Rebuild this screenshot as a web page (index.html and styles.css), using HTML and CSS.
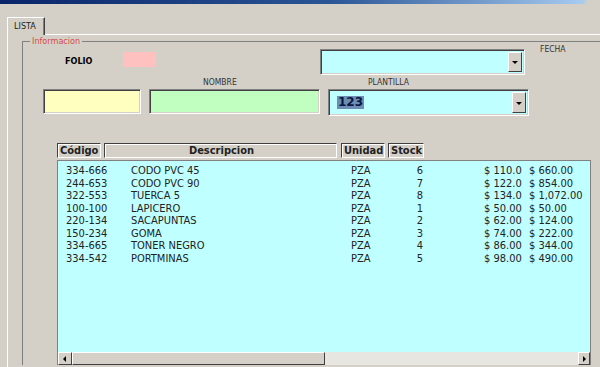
FILE: index.html
```html
<!DOCTYPE html>
<html lang="es">
<head>
  <meta charset="UTF-8" />
  <meta name="viewport" content="width=device-width, initial-scale=1.0"/>
  <title>Lista</title>
  <link rel="stylesheet" href="styles.css">
</head>
<body>

  <div class="titlebar"></div>

  <div class="tabs">
    <span class="tab">LISTA</span>
  </div>

  <div class="page">
    <fieldset class="group">
      <legend>Informacion</legend>

      <div class="row row-top">
        <span class="folio">FOLIO</span>
        <span class="pink"></span>
        <div class="combo fecha"><span class="combo-btn"></span></div>
        <span class="lbl fecha-lbl">FECHA</span>
      </div>

      <div class="row row-lbl">
        <span class="lbl nombre-lbl">NOMBRE</span>
        <span class="lbl">PLANTILLA</span>
      </div>

      <div class="row row-inputs">
        <div class="field yellow"></div>
        <div class="field green"></div>
        <div class="combo plantilla">
          <span class="sel">123</span>
          <span class="combo-btn"></span>
        </div>
      </div>

      <div class="list">
        <div class="list-head">
          <span class="hcol h-code">Código</span>
          <span class="hcol h-desc">Descripcion</span>
          <span class="hcol h-unit">Unidad</span>
          <span class="hcol h-stock">Stock</span>
        </div>

        <div class="list-body">
          <div class="rows">
            <div class="item"><span>334-666</span><span>CODO PVC 45</span><span>PZA</span><span class="num">6</span><span></span><span>$ 110.0</span><span>$ 660.00</span></div>
            <div class="item"><span>244-653</span><span>CODO PVC 90</span><span>PZA</span><span class="num">7</span><span></span><span>$ 122.0</span><span>$ 854.00</span></div>
            <div class="item"><span>322-553</span><span>TUERCA 5</span><span>PZA</span><span class="num">8</span><span></span><span>$ 134.0</span><span>$ 1,072.00</span></div>
            <div class="item"><span>100-100</span><span>LAPICERO</span><span>PZA</span><span class="num">1</span><span></span><span>$ 50.00</span><span>$ 50.00</span></div>
            <div class="item"><span>220-134</span><span>SACAPUNTAS</span><span>PZA</span><span class="num">2</span><span></span><span>$ 62.00</span><span>$ 124.00</span></div>
            <div class="item"><span>150-234</span><span>GOMA</span><span>PZA</span><span class="num">3</span><span></span><span>$ 74.00</span><span>$ 222.00</span></div>
            <div class="item"><span>334-665</span><span>TONER NEGRO</span><span>PZA</span><span class="num">4</span><span></span><span>$ 86.00</span><span>$ 344.00</span></div>
            <div class="item"><span>334-542</span><span>PORTMINAS</span><span>PZA</span><span class="num">5</span><span></span><span>$ 98.00</span><span>$ 490.00</span></div>
          </div>

          <div class="hscroll">
            <span class="sbtn left"></span>
            <span class="thumb"></span>
            <span class="track"></span>
            <span class="sbtn right"></span>
          </div>
        </div>
      </div>
    </fieldset>
  </div>

</body>
</html>
```

FILE: styles.css
```css
body {
  margin: 0;
  height: 367px;
  overflow: hidden;
  background-color: #d4d0c8;
  color: #000;
  font-family: "DejaVu Sans Condensed", "DejaVu Sans", sans-serif;
}

.titlebar {
  height: 4px;
  background: linear-gradient(to right, #0a246a, #2a5596 55%, #a6caf0 97%, #d4d0c8 98%);
}

/* pestaña */
.tabs {
  display: flex;
  padding: 13px 0 0 7px;
}

.tab {
  position: relative;
  z-index: 1;
  box-sizing: border-box;
  width: 38px;
  height: 18px;
  margin-bottom: -1px;
  padding-left: 6px;
  background-color: #d4d0c8;
  border-top: 1px solid #fff;
  border-left: 1px solid #fff;
  border-right: 1px solid #404040;
  box-shadow: inset -1px 0 0 #808080;
  font-size: 9px;
  line-height: 16px;
  color: #222;
}

.page {
  margin-left: 7px;
  border-top: 1px solid #fff;
  border-left: 1px solid #fff;
  height: 340px;
}

/* marco Informacion */
.group {
  margin: 1px 0 0 14px;
  padding: 0;
  min-width: 0;
  border: none;
  border-top: 1px solid #808080;
  border-left: 1px solid #808080;
}

.group legend {
  margin-left: 7px;
  padding: 0 2px;
  font-size: 9px;
  line-height: 11px;
  color: #d84a4a;
}

.row {
  display: flex;
}

.row-top {
  margin-top: 2px;
  height: 26px;
  align-items: flex-start;
}

.folio {
  width: 58px;
  margin-left: 42px;
  font-size: 9px;
  font-weight: bold;
  line-height: 25px;
}

.pink {
  width: 33px;
  height: 15px;
  margin-top: 3px;
  background-color: #ffc0c0;
}

.lbl {
  font-size: 8.5px;
  line-height: 10px;
  color: #333;
}

.fecha-lbl {
  margin: -5px 0 0 15px;
}

.row-lbl {
  margin-top: 2px;
  height: 10px;
}

.nombre-lbl {
  width: 165px;
  margin-left: 180px;
}

.row-inputs {
  margin-top: 2px;
  align-items: flex-start;
}

/* cajas de texto hundidas */
.field,
.combo {
  box-sizing: border-box;
  border: 1px solid;
  border-color: #808080 #fff #fff #808080;
  box-shadow: inset 1px 1px 0 #404040, inset -1px -1px 0 #d4d0c8;
}

.field {
  height: 25px;
}

.yellow {
  width: 98px;
  margin-left: 20px;
  background-color: #ffffc0;
}

.green {
  width: 171px;
  margin-left: 8px;
  background-color: #c0ffc0;
}

.combo {
  display: flex;
  align-items: stretch;
  padding: 2px;
  background-color: #c0ffff;
}

.fecha {
  width: 205px;
  height: 26px;
  margin-left: 164px;
}

.plantilla {
  width: 201px;
  height: 27px;
  margin-left: 8px;
}

.combo-btn {
  position: relative;
  box-sizing: border-box;
  width: 14px;
  margin-left: auto;
  background-color: #d4d0c8;
  border: 1px solid;
  border-color: #fff #404040 #404040 #fff;
}

.combo-btn::after {
  content: "";
  position: absolute;
  left: 3px;
  top: 50%;
  margin-top: -1px;
  border-left: 3px solid transparent;
  border-right: 3px solid transparent;
  border-top: 3px solid #000;
}

.sel {
  align-self: center;
  margin-left: 6px;
  padding: 0 1px;
  background-color: #6d8db5;
  color: #0a1840;
  font-family: "DejaVu Sans", sans-serif;
  font-size: 12px;
  font-weight: bold;
  line-height: 13px;
}

/* lista */
.list {
  width: 534px;
  margin: 27px 0 0 34px;
}

.list-head {
  display: flex;
  height: 15px;
}

.hcol {
  box-sizing: border-box;
  height: 15px;
  padding-left: 2px;
  border: 1px solid;
  border-color: #404040 #fff #fff #404040;
  box-shadow: inset 1px 1px 0 #fff;
  font-size: 11px;
  font-weight: bold;
  line-height: 13px;
  color: #222;
}

.h-code {
  width: 44px;
}

.h-desc {
  width: 233px;
  margin-left: 3px;
  text-align: center;
}

.h-unit {
  width: 44px;
  margin-left: 4px;
}

.h-stock {
  width: 36px;
  margin-left: 3px;
}

.list-body {
  box-sizing: border-box;
  display: flex;
  flex-direction: column;
  height: 205px;
  margin-top: 2px;
  background-color: #c0ffff;
  border: 1px solid #808080;
  border-bottom: none;
}

.rows {
  padding: 4px 0 0 8px;
}

.item {
  display: grid;
  grid-template-columns: 65px 220px 40px 32px 61px 45px auto;
  font-size: 11px;
  line-height: 12.5px;
  color: #222;
}

.num {
  text-align: right;
}

/* barra de desplazamiento */
.hscroll {
  display: flex;
  height: 13px;
  margin-top: auto;
}

.sbtn,
.thumb {
  box-sizing: border-box;
  background-color: #d4d0c8;
  border: 1px solid;
  border-color: #fff #404040 #404040 #fff;
}

.sbtn {
  position: relative;
  width: 14px;
}

.sbtn.right {
  width: 12px;
}

.sbtn::after {
  content: "";
  position: absolute;
  top: 3px;
  border-top: 3px solid transparent;
  border-bottom: 3px solid transparent;
}

.sbtn.left::after {
  left: 4px;
  border-right: 3px solid #000;
}

.sbtn.right::after {
  left: 4px;
  border-left: 3px solid #000;
}

.thumb {
  width: 253px;
}

.track {
  flex: 1;
  background-color: #e8e6e1;
}
```
